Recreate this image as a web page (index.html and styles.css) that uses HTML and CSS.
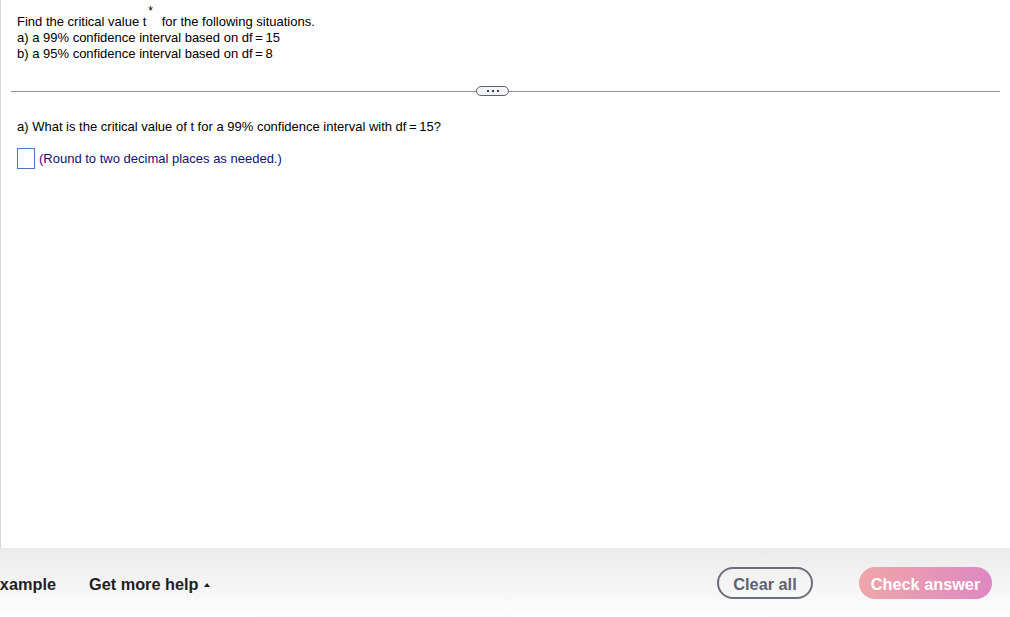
FILE: index.html
```html
<!DOCTYPE html>
<html lang="en">
<head>
    <meta charset="UTF-8">
    <title>Critical value of t</title>
    <link rel="stylesheet" href="styles.css">
</head>
<body>
    <div class="page">
        <div class="question-pane">
            <div class="problem">
                <p>Find the critical value t<sup>*</sup> for the following situations.</p>
                <p>a) a 99% confidence interval based on df&thinsp;=&thinsp;15</p>
                <p>b) a 95% confidence interval based on df&thinsp;=&thinsp;8</p>
            </div>
            <div class="divider">
                <span class="divider-line left"></span>
                <span class="more-pill"><i></i><i></i><i></i></span>
                <span class="divider-line"></span>
            </div>
            <div class="part">
                <p>a) What is the critical value of t for a 99% confidence interval with df&thinsp;=&thinsp;15?</p>
                <div class="answer-row">
                    <span class="answer-box"></span>
                    <span class="hint">(Round to two decimal places as needed.)</span>
                </div>
            </div>
        </div>
        <div class="footer">
            <div class="footer-left">
                <span class="footer-link example">Example</span>
                <span class="footer-link">Get more help <span class="caret"></span></span>
            </div>
            <div class="footer-right">
                <button class="btn btn-clear">Clear all</button>
                <button class="btn btn-check">Check answer</button>
            </div>
        </div>
    </div>
</body>
</html>
```

FILE: styles.css
```css
* {
    margin: 0;
    padding: 0;
    box-sizing: border-box;
}

body {
    font-family: 'Liberation Sans', Arial, sans-serif;
    color: #000;
    background: #fff;
    width: 1010px;
    height: 617px;
    overflow: hidden;
}

.page {
    display: flex;
    flex-direction: column;
    height: 617px;
}

.question-pane {
    flex: 1;
    border-left: 1px solid #d6d6d6;
    padding: 14px 10px 0 16px;
    font-size: 13px;
    line-height: 16px;
}

.problem sup {
    font-size: 12px;
    line-height: 0;
    vertical-align: 0;
    position: relative;
    top: -11px;
    margin: 0 5px 0 2px;
}

.divider {
    display: flex;
    align-items: center;
    margin: 24px 0 0 -6px;
    height: 10px;
}

.divider-line {
    flex: 1;
    height: 1px;
    background: #8d8f9c;
}

.divider-line.left {
    flex: 0 0 465px;
}

.more-pill {
    width: 33px;
    height: 10px;
    border: 1px solid #5d6070;
    border-radius: 5px;
    background: #f3f4f8;
    display: flex;
    align-items: center;
    justify-content: center;
    gap: 3px;
}

.more-pill i {
    width: 2px;
    height: 2px;
    background: #3a3d4c;
}

.part {
    padding-top: 23px;
}

.answer-row {
    display: flex;
    align-items: center;
    gap: 4px;
    margin-top: 13px;
}

.answer-box {
    width: 18px;
    height: 21px;
    border: 1px solid #4a78c2;
    background: #fff;
}

.hint {
    color: #10107a;
}

.footer {
    height: 69px;
    background: linear-gradient(#ebebeb, #fdfdfd);
    display: flex;
    align-items: center;
    justify-content: space-between;
    padding: 0 18px 0 0;
}

.footer-left {
    display: flex;
    align-items: center;
    gap: 33px;
    padding-top: 4px;
}

.footer-link {
    font-size: 16.3px;
    font-weight: 700;
    color: #1f1f24;
}

.example {
    margin-left: -11px;
}

.caret {
    display: inline-block;
    width: 0;
    height: 0;
    border-left: 3.5px solid transparent;
    border-right: 3.5px solid transparent;
    border-bottom: 4px solid #1f1f24;
    margin-left: 1px;
    vertical-align: 3px;
}

.footer-right {
    display: flex;
    align-items: center;
    gap: 46px;
}

.btn {
    font-family: 'Liberation Sans', Arial, sans-serif;
    font-size: 16.3px;
    font-weight: 700;
    height: 32px;
    border-radius: 16px;
    padding-top: 3px;
    cursor: pointer;
}

.btn-clear {
    width: 96px;
    background: transparent;
    border: 2px solid #6b6f7c;
    color: #5f6370;
}

.btn-check {
    width: 133px;
    border: none;
    color: #fff;
    background: linear-gradient(to right, #eea6a8, #df88c2);
}
```
